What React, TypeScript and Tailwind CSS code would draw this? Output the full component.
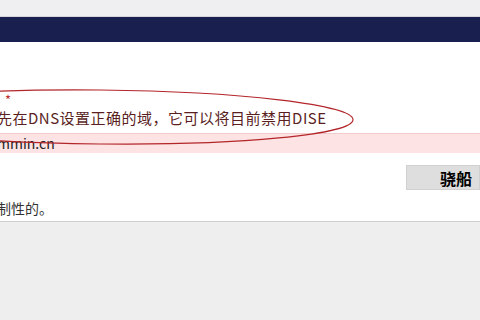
const cjk = { fontFamily: '"Noto Sans CJK SC", "Noto Sans", sans-serif' };

const App = () => {
  return (
    <div
      className="relative flex h-[320px] w-[480px] flex-col overflow-hidden bg-[#eeeeee]"
      style={cjk}
    >
      <div className="h-[17px] border-b border-[#d6d6da] bg-[#efeff1]" />
      <div className="h-[25px] bg-[#19204f]" />

      <div className="flex flex-col border-b border-[#cfcfcf] bg-white pb-[4px] pt-[48px]">
        <div className="h-[20px] pl-[5px] text-[13px] leading-[20px] text-[#c0302f]">*</div>
        <div className="-ml-[3px] h-[16px] whitespace-nowrap text-[15px] leading-[16px] tracking-[0.5px] text-[#5a1f1f]">
          先在DNS设置正确的域，它可以将目前禁用DISE
        </div>
        <div className="mt-[7px] flex h-[20px] items-center border-t border-[#f2cccc] bg-[#fde3e3] -ml-[3px] text-[14px] text-[#222]">
          mmin.cn
        </div>
        <div className="mt-[12px] flex justify-end">
          <button className="flex h-[25px] w-[74px] items-center justify-end border border-[#d0d0d0] bg-[#dedede] pr-[7px] text-[16px] font-bold text-black">
            骁船
          </button>
        </div>
        <div className="-ml-[3px] mt-[10px] h-[17px] whitespace-nowrap text-[14px] leading-[17px] text-[#333]">
          制性的。
        </div>
      </div>

      <svg
        className="pointer-events-none absolute left-0 top-0"
        width="480"
        height="320"
        viewBox="0 0 480 320"
      >
        <ellipse
          cx="100"
          cy="117"
          rx="253"
          ry="27"
          fill="none"
          stroke="#b3262b"
          strokeWidth="1.2"
          transform="rotate(0.6 100 117)"
        />
      </svg>
    </div>
  );
};

export default App;
